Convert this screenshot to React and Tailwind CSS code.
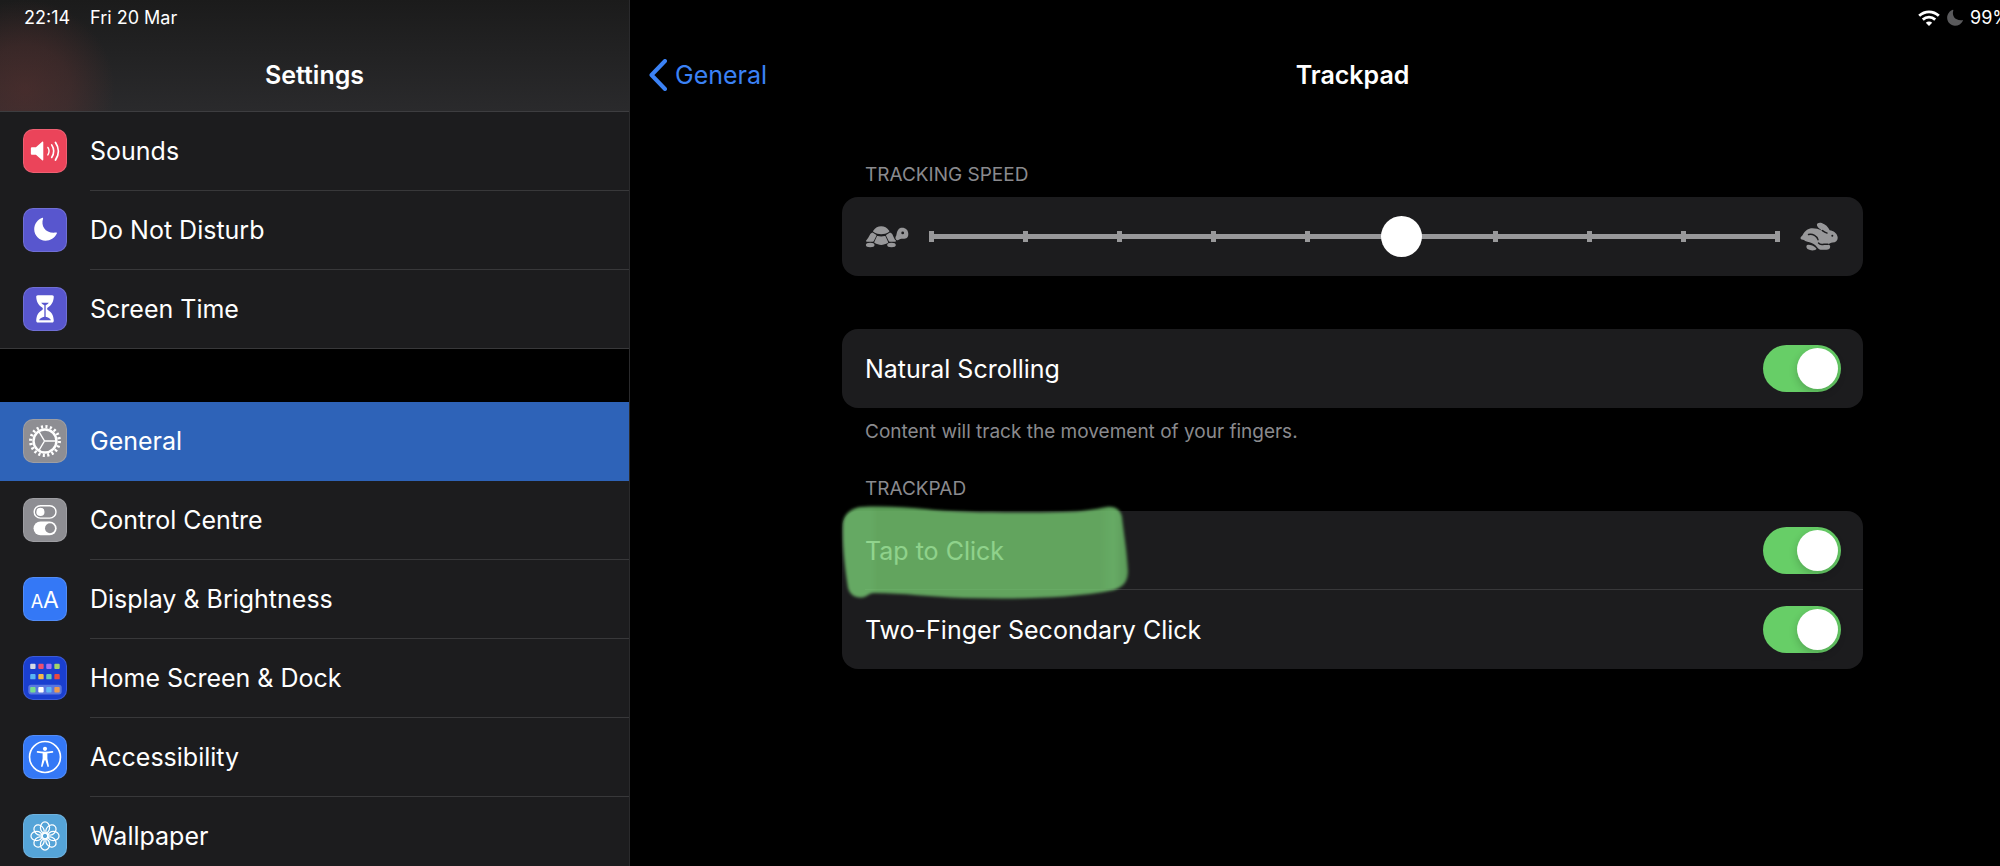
import React, { useState } from 'react';

function SoundsIcon() {
  return (
    <svg viewBox="0 0 44 44" className="size-full" fill="none" stroke="#fff" strokeLinecap="round">
      <path d="M8.500 18h4l6.500-5.600c.6-.5 1.200-.2 1.200.5v18.200c0 .7-.6 1-1.200.5L12.500 26h-4c-.7 0-1.300-.5-1.300-1.200v-5.600c0-.7.500-1.200 1.300-1.200z" fill="#fff" stroke="none" />
      <path d="M25 18.300c1.500 2.300 1.500 5.500 0 7.800" strokeWidth="1.500" />
      <path d="M29 15.600c2.600 4 2.600 9.200 0 13.200" strokeWidth="1.700" />
      <path d="M33 13c3.900 5.600 3.900 12.800 0 18.400" strokeWidth="1.900" />
    </svg>
  );
}

function MoonShape({ fill }) {
  return (
    <path d="M19.300 9.200c.4-.2.9.2.700.7-2.700 8.200 2.700 16.200 13.700 14.800.6-.1 1 .4.7 1-2.200 4.500-6.700 7.500-11.900 7.500-6.500 0-11.800-5.400-11.800-11.900 0-5.300 3.500-10.400 8.600-12.100z" fill={fill} />
  );
}

function MoonIcon() {
  return (
    <svg viewBox="0 0 44 44" className="size-full">
      <MoonShape fill="#fff" />
    </svg>
  );
}

function HourglassIcon() {
  return (
    <svg viewBox="0 0 44 44" className="size-full">
      <path d="M14.500 7.500h15c1.100 0 1.800.8 1.700 1.900-.4 5.200-2 8.200-6.200 11-1 .7-1 2 0 2.700 4.200 2.700 5.800 5.700 6.200 10.900.1 1.300-.6 2.200-1.700 2.200h-15c-1.100 0-1.800-.9-1.700-2.200.4-5.200 2-8.200 6.200-10.900 1-.7 1-2 0-2.700-4.200-2.800-5.800-5.800-6.200-11-.1-1.100.6-1.900 1.700-1.900z" fill="#fff" />
      <path d="M18 15.500h8c-.8 1.300-2.200 2.100-3.300 2.700V30c2.300.7 4.900 1.700 5.600 3.700H15.700c.7-2 3.300-3 5.600-3.700V18.200c-1.100-.6-2.500-1.400-3.300-2.700z" fill="#5856ce" />
    </svg>
  );
}

function GearIcon() {
  return (
    <svg viewBox="0 0 44 44" className="size-full" fill="none" stroke="#fff">
      <circle cx="22" cy="22" r="12" strokeWidth="2.500" />
      <circle cx="22" cy="22" r="15" strokeWidth="3.400" strokeDasharray="2.200 2.512" />
      <path d="M21.500 22H34M21.500 22l-6-10M21.500 22l-6 10" strokeWidth="1.500" />
    </svg>
  );
}

function SwitchesIcon() {
  return (
    <svg viewBox="0 0 44 44" className="size-full">
      <rect x="10.700" y="7" width="22.800" height="13" rx="6.500" fill="none" stroke="#fff" strokeWidth="1.500" />
      <circle cx="17.200" cy="13.500" r="4.300" fill="#fff" />
      <rect x="10" y="23.500" width="24.200" height="14.500" rx="7.250" fill="#fff" />
      <circle cx="27.200" cy="30.700" r="5.200" fill="#8e8e93" />
    </svg>
  );
}

function TextSizeIcon() {
  return (
    <svg viewBox="0 0 44 44" className="size-full" fill="#fff" fontFamily="Inter, sans-serif">
      <text x="7" y="31" fontSize="19">A</text>
      <text x="20" y="31" fontSize="24">A</text>
    </svg>
  );
}

const APP_DOTS = [
  ['#d3d9e6', 6.5, 7], ['#ee4f72', 15, 7], ['#a070f5', 23.3, 7], ['#a5d468', 31.8, 7],
  ['#59b4f4', 6.5, 17.8], ['#f5b94a', 15, 17.8], ['#62cbb4', 23.3, 17.8], ['#e8493f', 31.8, 17.8],
  ['#78dc8e', 6.5, 31.5], ['#ffffff', 15, 31.5], ['#5fb8f2', 23.3, 31.5], ['#eb9a52', 31.8, 31.5],
];

function HomeScreenIcon() {
  return (
    <svg viewBox="0 0 44 44" className="size-full">
      <rect x="4.500" y="29" width="35" height="10.200" rx="3" fill="#5a77e0" />
      {APP_DOTS.map(([color, x, y]) => (
        <rect key={`${x}-${y}`} x={x} y={y} width="5.600" height="5.600" rx="1" fill={color} />
      ))}
    </svg>
  );
}

function AccessibilityIcon() {
  return (
    <svg viewBox="0 0 44 44" className="size-full" fill="none" stroke="#fff">
      <circle cx="22" cy="22" r="16.200" strokeWidth="1.700" />
      <circle cx="22" cy="13.400" r="2.200" fill="#fff" stroke="none" />
      <path d="M14.200 16.600c5.200 1.100 10.400 1.100 15.600 0" strokeWidth="1.700" strokeLinecap="round" />
      <path d="M19.500 17.300h5v6.400l1.700 8.300-1.400.5-2.400-7h-.8l-2.400 7-1.400-.5 1.700-8.300z" fill="#fff" stroke="none" />
    </svg>
  );
}

const PETALS = [0, 45, 90, 135, 180, 225, 270, 315];

function FlowerIcon() {
  return (
    <svg viewBox="0 0 44 44" className="size-full" fill="none" stroke="#fff" strokeWidth="1.300">
      {PETALS.map(angle => (
        <ellipse key={angle} cx="22" cy="13.200" rx="4.800" ry="5.900" transform={`rotate(${angle} 22 22)`} />
      ))}
      <circle cx="22" cy="22" r="3" />
    </svg>
  );
}

function TortoiseIcon() {
  return (
    <svg viewBox="0 0 44 24" className="h-6 w-11 shrink-0" fill="#98989a" aria-hidden="true">
      <path d="M8.200 5.800C10.300 2.600 13 1.200 16.200 1.200s5.900 1.400 8 4.600c.3.500.2.900-.3 1.200-4.600 2.900-10.800 2.900-15.400 0-.5-.300-.6-.700-.3-1.200z" />
      <path d="M7.500 7.500l3.600 2.200c.4.300.5.600.3 1l-2.600 5.400c-.2.500-.5.600-1 .6H1.900c-.9 0-1.200-.6-.7-1.200 1.500-1.700 2.700-3.500 3.700-5.700.5-1 1.200-1.900 2.600-2.300z" />
      <path d="M12.700 11c2.300.5 4.700.5 7 0 .4-.1.700 0 .9.500l2.500 5.500c.2.500.1.800-.4 1.100-4 2.400-9 2.400-13 0-.5-.3-.6-.6-.4-1.100l2.500-5.500c.2-.5.500-.6.900-.5z" />
      <path d="M25 7.500l-3.600 2.200c-.4.300-.5.600-.3 1l2.600 5.400c.2.500.5.600 1 .6h5.100c1.400 0 1.700-.6 1-1.200-1.400-1.300-2.200-3.500-3.100-5.600-.5-1.100-1.300-2-2.700-2.400z" />
      <ellipse cx="5.200" cy="20" rx="4.300" ry="2.200" />
      <ellipse cx="26.500" cy="20" rx="4.300" ry="2.200" />
      <path d="M37 2.800c3.900 0 6.300 2.500 6.300 6.100 0 3.300-1.600 4.800-5.200 4.900-2.300.1-3.500.4-4.800 1.100-1.600.8-2.600-.2-2.800-1.300-.2-1.200.1-2.100.8-3.100C32.100 5.400 33.800 2.800 37 2.800zm.7 3.700a1.400 1.400 0 100 2.800 1.400 1.400 0 000-2.800z" fillRule="evenodd" />
    </svg>
  );
}

function HareIcon() {
  return (
    <svg viewBox="0 0 38 29" className="h-[29px] w-[38px] shrink-0" aria-hidden="true">
      <path d="M.5 16c0-1.200 1.500-1.700 2.300-3.200C5 8.900 8 6.300 12.500 6.300c3.300 0 6 .8 9 2.300l2.600 1.300c-3.600-2.100-6-3.900-6.900-5.800C16 1.500 18.500.2 21.700 1c3.600 1 6.600 4.200 8 7.300 3.900.5 6.900 2.800 7.800 6.200.9 3.600-1.300 6-4.900 6.100-1 .1-1.600.2-2.500.7-.9.600-2 .8-3.200.9 2.200.1 3.300.9 3.300 2.600 0 1.900-1.500 3-3.800 3h-4.300c-2.400 0-3.800-1-5.200-2.900-1.800-2.500-4.600-3.800-7.400-4.600C6.300 19.400 5 18.800 4 17.900 2.500 17.900.5 17.500.5 16z" fill="#98989a" />
      <path d="M8 22.800c2.600-.1 5.500.9 8 3.300.8.800.3 1.600-.8 1.900-2.500.7-5.200.5-7.200-.7-2.100-1.300-2.100-4.400 0-4.500z" fill="#98989a" />
      <path d="M8.500 12.500c4.300-.8 8.500 1.300 9.500 5.200M18.500 21c1.300 1.600 3.600 1.700 5.500 1.200h4M22.500 8.600c1.600 1.200 3.200 2 4.600 2.500" fill="none" stroke="#1c1c1e" strokeWidth="1.400" strokeLinecap="round" />
      <circle cx="32.300" cy="13.800" r="1" fill="#1c1c1e" />
    </svg>
  );
}

const GROUPS = [
  [
    { label: 'Sounds', icon: SoundsIcon, tile: 'bg-[#eb445a]' },
    { label: 'Do Not Disturb', icon: MoonIcon, tile: 'bg-[#5856ce]' },
    { label: 'Screen Time', icon: HourglassIcon, tile: 'bg-[#5856ce]' },
  ],
  [
    { label: 'General', icon: GearIcon, tile: 'bg-[#8e8e93]', active: true },
    { label: 'Control Centre', icon: SwitchesIcon, tile: 'bg-[#8e8e93]' },
    { label: 'Display & Brightness', icon: TextSizeIcon, tile: 'bg-[#3478f6]' },
    { label: 'Home Screen & Dock', icon: HomeScreenIcon, tile: 'bg-[#1a3fd0]' },
    { label: 'Accessibility', icon: AccessibilityIcon, tile: 'bg-[#3478f6]' },
    { label: 'Wallpaper', icon: FlowerIcon, tile: 'bg-[#55a4d8]' },
  ],
];

function SidebarRow({ label, icon: Icon, tile, active, last }) {
  const line = active ? 'border-[#2e63b8]' : 'border-[#38383a]';
  return (
    <a
      href="#"
      aria-current={active ? 'page' : undefined}
      className={`flex h-[79px] pl-[23px] ${active ? 'bg-[#2e63b8]' : 'bg-[#1c1c1e]'} ${last ? 'border-b border-[#38383a]' : ''}`}
    >
      <span className={`mt-[17px] size-11 shrink-0 overflow-hidden rounded-[10px] border border-white/15 ${tile}`}>
        <Icon />
      </span>
      <span className={`ml-[23px] flex flex-1 items-center ${last ? '' : `border-b ${line}`}`}>{label}</span>
    </a>
  );
}

function Toggle({ id, label }) {
  const [on, setOn] = useState(true);
  return (
    <div className="flex h-[79px] items-center justify-between pr-[22px]">
      <label htmlFor={id}>{label}</label>
      <input
        id={id}
        type="checkbox"
        role="switch"
        checked={on}
        onChange={e => setOn(e.target.checked)}
        className="h-[47px] w-[78px] appearance-none rounded-full bg-[#39393d] p-[3px] checked:bg-[#67ce67] before:block before:size-[41px] before:rounded-full before:bg-white before:shadow-[0_3px_8px_rgba(0,0,0,0.2)] checked:before:translate-x-[31px]"
      />
    </div>
  );
}

function SpeedSlider() {
  const [speed, setSpeed] = useState(5);
  return (
    <div className="mx-5 grid flex-1 items-center">
      <div className="col-start-1 row-start-1 h-[5px] bg-[#98989a]" />
      <div className="col-start-1 row-start-1 flex justify-between">
        {Array.from({ length: 10 }, (_, i) => (
          <span key={i} className="h-[11px] w-[5px] bg-[#98989a]" />
        ))}
      </div>
      <input
        type="range"
        min="0"
        max="9"
        value={speed}
        onChange={e => setSpeed(Number(e.target.value))}
        aria-labelledby="tracking-speed"
        className="z-10 col-start-1 row-start-1 -mx-[18px] h-[41px] appearance-none bg-transparent [&::-webkit-slider-thumb]:size-[41px] [&::-webkit-slider-thumb]:appearance-none [&::-webkit-slider-thumb]:rounded-full [&::-webkit-slider-thumb]:bg-white"
      />
    </div>
  );
}

// Marker stroke over the first row of the trackpad group
function Highlight() {
  return (
    <svg viewBox="0 0 300 104" className="pointer-events-none absolute -left-1.5 -top-2 h-[104px] w-[300px]" aria-hidden="true">
      <defs>
        <filter id="soft" x="-5%" y="-10%" width="110%" height="120%">
          <feGaussianBlur stdDeviation="1.500" />
        </filter>
        <linearGradient id="marker" x1="0" x2="1" y1="0" y2="0">
          <stop offset="0" stopColor="#78cc74" />
          <stop offset="0.100" stopColor="#78cc74" />
          <stop offset="0.120" stopColor="#73c66e" />
          <stop offset="0.900" stopColor="#73c66e" />
          <stop offset="0.950" stopColor="#7ace77" />
          <stop offset="1" stopColor="#68b865" />
        </linearGradient>
      </defs>
      <path
        d="M7 20C8 11 15 5 25 4c22-1 44 0 64 2 36 4 96 4 138 3 18 0 32-3 44-5 8-1 14 3 15 10 2 18 5 34 6 54 0 11-5 16-14 19-44 9-100 9-150 8-34-1-60-5-90-5-5 0-6 3-10 4-8 2-14-2-16-9C9 65 6 42 7 20z"
        fill="url(#marker)"
        fillOpacity="0.8"
        filter="url(#soft)"
      />
    </svg>
  );
}

export default function App() {
  return (
    <div className="flex h-screen overflow-hidden bg-black font-[Inter,sans-serif] text-[25px] leading-8 text-white">
      <aside className="flex w-[630px] shrink-0 flex-col border-r border-[#2a2a2c]">
        <header className="h-28 shrink-0 border-b border-[#3d3d40] bg-[radial-gradient(ellipse_90px_90px_at_25px_90px,rgba(100,50,48,0.5),rgba(100,50,48,0.35)_50%,transparent),linear-gradient(to_bottom,#1b1b1b,#2a2a2c)]">
          <div className="flex gap-5 pl-6 pt-2 text-lg leading-5">
            <span>22:14</span>
            <span>Fri 20 Mar</span>
          </div>
          <h1 className="mt-[31px] text-center font-semibold">Settings</h1>
        </header>
        <nav className="flex flex-col gap-[53px]">
          {GROUPS.map((rows, g) => (
            <div key={g}>
              {rows.map((row, i) => (
                <SidebarRow key={row.label} {...row} last={i === rows.length - 1} />
              ))}
            </div>
          ))}
        </nav>
      </aside>

      <main className="min-w-0 flex-1 overflow-hidden">
        <div className="flex items-center justify-end gap-1.5 pt-2 text-lg leading-5">
          <svg viewBox="0 0 22 16" className="h-4 w-[22px]" fill="none" stroke="#fff" strokeWidth="2.800" role="img" aria-label="Wi-Fi">
            <path d="M1.200 5.800C6.800.5 15.200.5 20.800 5.800" />
            <path d="M4.800 9.600c3.600-3.300 8.800-3.300 12.400 0" />
            <path d="M11 16l-3.200-3.300c1.900-1.700 4.500-1.700 6.400 0z" fill="#fff" stroke="none" />
          </svg>
          <svg viewBox="9 8 27 27" className="size-[18px]" role="img" aria-label="Do Not Disturb">
            <MoonShape fill="#5a5a5c" />
          </svg>
          <span className="w-[30px] whitespace-nowrap">99%</span>
        </div>

        <div className="mt-[31px] grid grid-cols-[212px_1fr_137px] items-center">
          <a href="#" className="flex items-center gap-2 pl-[19px] text-[#3b82f6]">
            <svg viewBox="0 0 18 32" className="h-8 w-[18px] shrink-0" fill="none" stroke="currentColor" strokeWidth="4" strokeLinecap="round" strokeLinejoin="round">
              <path d="M16 2L2.500 16 16 30" />
            </svg>
            <span>General</span>
          </a>
          <h2 className="text-center font-semibold">Trackpad</h2>
        </div>

        <div className="ml-[212px] mr-[137px] pt-[72px]">
          <h3 id="tracking-speed" className="pl-[23px] text-[19px] leading-6 text-[#8a8a8e]">TRACKING SPEED</h3>
          <section className="mt-[10px] flex h-[79px] items-center rounded-2xl bg-[#1c1c1e] pl-[23px] pr-[25px]">
            <TortoiseIcon />
            <SpeedSlider />
            <HareIcon />
          </section>

          <section className="mt-[53px] rounded-2xl bg-[#1c1c1e] pl-[23px]">
            <Toggle id="natural-scrolling" label="Natural Scrolling" />
          </section>
          <p className="mt-3 pl-[23px] text-[19px] leading-6 text-[#8a8a8e]">Content will track the movement of your fingers.</p>

          <h3 className="mt-[33px] pl-[23px] text-[19px] leading-6 text-[#8a8a8e]">TRACKPAD</h3>
          <section className="relative mt-[10px] rounded-2xl bg-[#1c1c1e] pl-[23px]">
            <Toggle id="tap-to-click" label="Tap to Click" />
            <div className="-mt-px h-px bg-[#38383a]" />
            <Toggle id="secondary-click" label="Two-Finger Secondary Click" />
            <Highlight />
          </section>
        </div>
      </main>
    </div>
  );
}
